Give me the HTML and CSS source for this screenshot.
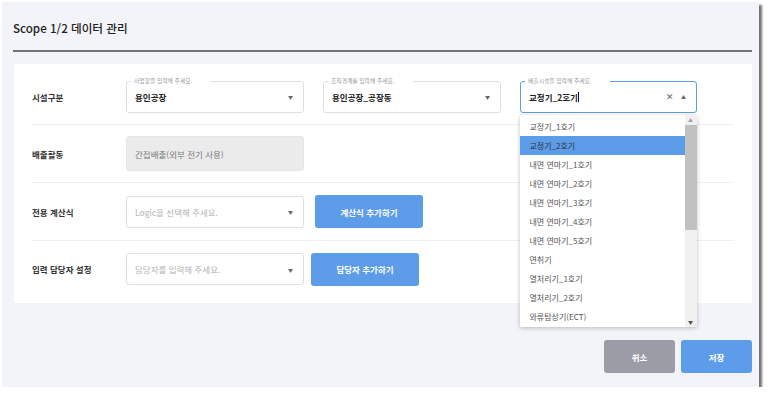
FILE: index.html
```html
<!DOCTYPE html>
<html lang="ko">
<head>
    <meta charset="UTF-8">
    <meta name="viewport" content="width=device-width, initial-scale=1.0">
    <title>Scope 1/2 데이터 관리</title>
    <link rel="stylesheet" href="styles.css">
</head>
<body>
    <div class="panel">
        <div class="header">Scope 1/2 데이터 관리</div>
        <div class="card">
            <div class="row row-first">
                <div class="label">시설구분</div>
                <div class="fields">
                    <div class="field">
                        <span class="float-label">사업장을 입력해 주세요.</span>
                        <span class="value">용인공장</span>
                        <span class="caret">&#9660;</span>
                    </div>
                    <div class="field">
                        <span class="float-label">조직경계를 입력해 주세요.</span>
                        <span class="value">용인공장_공장동</span>
                        <span class="caret">&#9660;</span>
                    </div>
                    <div class="field field-focus">
                        <span class="float-label">배출시설을 입력해 주세요.</span>
                        <span class="value">교정기_2호기<span class="cursor"></span></span>
                        <span class="clear">&#10005;</span>
                        <span class="caret caret-up">&#9650;</span>
                        <div class="menu">
                            <ul class="options">
                                <li>교정기_1호기</li>
                                <li class="selected">교정기_2호기</li>
                                <li>내면 연마기_1호기</li>
                                <li>내면 연마기_2호기</li>
                                <li>내면 연마기_3호기</li>
                                <li>내면 연마기_4호기</li>
                                <li>내면 연마기_5호기</li>
                                <li>면취기</li>
                                <li>열처리기_1호기</li>
                                <li>열처리기_2호기</li>
                                <li>와류탐상기(ECT)</li>
                            </ul>
                            <div class="scrollbar">
                                <span class="scroll-arrow">&#9650;</span>
                                <span class="thumb"></span>
                                <span class="scroll-arrow scroll-down">&#9660;</span>
                            </div>
                        </div>
                    </div>
                </div>
            </div>
            <div class="row row-mid">
                <div class="label">배출활동</div>
                <div class="fields">
                    <div class="field field-disabled">
                        <span class="value">간접배출(외부 전기 사용)</span>
                    </div>
                </div>
            </div>
            <div class="row row-mid">
                <div class="label">전용 계산식</div>
                <div class="fields fields-tight">
                    <div class="field">
                        <span class="value placeholder">Logic을 선택해 주세요.</span>
                        <span class="caret">&#9660;</span>
                    </div>
                    <a class="btn btn-add">계산식 추가하기</a>
                </div>
            </div>
            <div class="row row-last">
                <div class="label">입력 담당자 설정</div>
                <div class="fields fields-tighter">
                    <div class="field">
                        <span class="value placeholder">담당자를 입력해 주세요.</span>
                        <span class="caret">&#9660;</span>
                    </div>
                    <a class="btn btn-add">담당자 추가하기</a>
                </div>
            </div>
        </div>
        <div class="actions">
            <a class="btn btn-cancel">취소</a>
            <a class="btn btn-save">저장</a>
        </div>
    </div>
</body>
</html>
```

FILE: styles.css
```css
body {
    font-family: 'Noto Sans CJK KR', 'Noto Sans', sans-serif;
    background-color: #FFFFFF;
    margin: 0;
    padding: 0;
}
.panel {
    margin: 2px 0 0 2px;
    width: 739px;
    height: 385px;
    padding: 0 7px 0 11px;
    background-color: #F3F4F9;
    box-shadow: 3px 3px 2px rgba(0,0,0,0.55);
}
.header {
    padding: 18px 0 13px 0;
    line-height: 17px;
    font-size: 11.6px;
    font-weight: 500;
    color: #222;
    border-bottom: 2px solid #737373;
}
.card {
    background: white;
    margin: 12px 0 0 1px;
    padding: 0 18px;
    border-radius: 2px;
}
.row {
    display: flex;
    align-items: center;
    border-bottom: 1px solid #EEF0F5;
}
.row-first {
    height: 61px;
    padding-top: 5px;
    box-sizing: border-box;
}
.row-mid {
    height: 57px;
}
.row-last {
    height: 62px;
    padding-bottom: 6px;
    box-sizing: border-box;
    border-bottom: none;
}
.label {
    width: 94px;
    font-size: 8.5px;
    font-weight: 700;
    color: #333;
}
.fields {
    display: flex;
    align-items: center;
    gap: 19px;
}
.fields-tight {
    gap: 11px;
}
.fields-tighter {
    gap: 7px;
}
.field {
    position: relative;
    width: 178px;
    height: 32px;
    box-sizing: border-box;
    border: 1px solid #DCDFE5;
    border-radius: 3px;
    display: flex;
    align-items: center;
    padding: 0 8px;
    background: white;
}
.field-focus {
    border: 1.5px solid #5C9CE8;
    width: 177px;
}
.field-disabled {
    height: 35px;
    background: #EBEBEB;
    border-color: #E6E6E6;
}
.float-label {
    position: absolute;
    top: -5px;
    left: 4px;
    padding: 0 18px 0 3px;
    background: white;
    font-size: 5.8px;
    line-height: 8px;
    color: #9A9A9A;
}
.value {
    flex: 1;
    font-size: 8.5px;
    font-weight: 700;
    color: #222;
    white-space: nowrap;
}
.field-disabled .value {
    color: #7A7A7A;
    font-weight: 400;
}
.placeholder {
    color: #B4B4B4;
    font-weight: 400;
}
.cursor {
    display: inline-block;
    width: 1px;
    height: 10px;
    background: #111;
    vertical-align: -1px;
}
.caret {
    font-size: 5px;
    color: #666;
    margin-right: 2px;
}
.caret-up {
    margin-right: 2px;
}
.clear {
    font-size: 9px;
    color: #666;
    margin-right: 7px;
}
.menu {
    position: absolute;
    top: calc(100% + 3px);
    left: -1.5px;
    width: 177px;
    height: 212px;
    background: white;
    display: flex;
    box-shadow: 0 1px 4px rgba(0,0,0,0.25);
    border-radius: 2px;
    z-index: 2;
}
.options {
    list-style-type: none;
    margin: 0;
    padding: 2px 0 0 0;
    flex: 1;
}
.options li {
    height: 19px;
    line-height: 19px;
    padding-left: 10px;
    font-size: 8px;
    color: #555;
}
.options li.selected {
    background-color: #5C9CE8;
    color: #333;
}
.scrollbar {
    width: 12px;
    background: #F1F1F1;
    display: flex;
    flex-direction: column;
    align-items: center;
}
.scroll-arrow {
    font-size: 5px;
    line-height: 10px;
    color: #A3A3A3;
}
.scroll-down {
    margin-top: auto;
    color: #505050;
}
.thumb {
    width: 12px;
    height: 105px;
    background: #C1C1C1;
}
.btn {
    display: flex;
    align-items: center;
    justify-content: center;
    width: 108px;
    height: 33px;
    border-radius: 3px;
    background-color: #5C9CE8;
    color: white;
    font-size: 8.5px;
    font-weight: 700;
    text-decoration: none;
}
.actions {
    display: flex;
    justify-content: flex-end;
    gap: 6px;
    margin-top: 37px;
}
.btn-cancel, .btn-save {
    width: 71px;
}
.btn-cancel {
    background-color: #9A9DA6;
}
```
